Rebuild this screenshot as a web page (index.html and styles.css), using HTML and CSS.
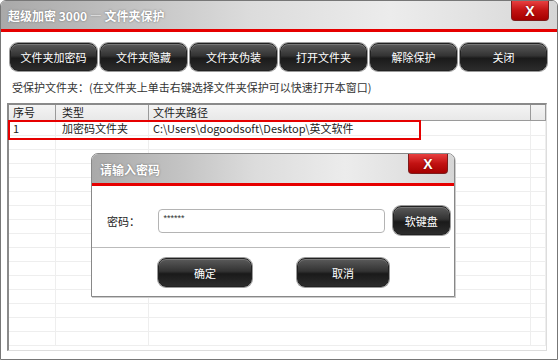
FILE: index.html
```html
<!DOCTYPE html>
<html lang="zh-CN">
<head>
  <meta charset="UTF-8">
  <title>超级加密 3000 — 文件夹保护</title>
  <link rel="stylesheet" href="styles.css">
</head>
<body>

  <!-- Main window -->
  <div class="window">
    <div class="titlebar">
      <span class="title">超级加密 3000 — 文件夹保护</span>
      <span class="close-btn">X</span>
    </div>
    <div class="redline"></div>

    <div class="toolbar">
      <button class="btn">文件夹加密码</button>
      <button class="btn">文件夹隐藏</button>
      <button class="btn">文件夹伪装</button>
      <button class="btn">打开文件夹</button>
      <button class="btn">解除保护</button>
      <button class="btn">关闭</button>
    </div>

    <p class="hint">受保护文件夹：(在文件夹上单击右键选择文件夹保护可以快速打开本窗口)</p>

    <div class="list">
      <div class="list-head">
        <div class="cell c-no">序号</div>
        <div class="cell c-type">类型</div>
        <div class="cell c-path">文件夹路径</div>
        <div class="cell c-end"></div>
      </div>
      <div class="list-row first">
        <div class="cell c-no">1</div>
        <div class="cell c-type">加密码文件夹</div>
        <div class="cell c-path">C:\Users\dogoodsoft\Desktop\英文软件</div>
        <div class="cell c-end"></div>
      </div>
      <div class="list-row"><div class="cell c-no"></div><div class="cell c-type"></div><div class="cell c-path"></div><div class="cell c-end"></div></div>
      <div class="list-row"><div class="cell c-no"></div><div class="cell c-type"></div><div class="cell c-path"></div><div class="cell c-end"></div></div>
      <div class="list-row"><div class="cell c-no"></div><div class="cell c-type"></div><div class="cell c-path"></div><div class="cell c-end"></div></div>
      <div class="list-row"><div class="cell c-no"></div><div class="cell c-type"></div><div class="cell c-path"></div><div class="cell c-end"></div></div>
      <div class="list-row"><div class="cell c-no"></div><div class="cell c-type"></div><div class="cell c-path"></div><div class="cell c-end"></div></div>
      <div class="list-row"><div class="cell c-no"></div><div class="cell c-type"></div><div class="cell c-path"></div><div class="cell c-end"></div></div>
      <div class="list-row"><div class="cell c-no"></div><div class="cell c-type"></div><div class="cell c-path"></div><div class="cell c-end"></div></div>
      <div class="list-row"><div class="cell c-no"></div><div class="cell c-type"></div><div class="cell c-path"></div><div class="cell c-end"></div></div>
      <div class="list-row"><div class="cell c-no"></div><div class="cell c-type"></div><div class="cell c-path"></div><div class="cell c-end"></div></div>
      <div class="list-row"><div class="cell c-no"></div><div class="cell c-type"></div><div class="cell c-path"></div><div class="cell c-end"></div></div>
      <div class="list-row"><div class="cell c-no"></div><div class="cell c-type"></div><div class="cell c-path"></div><div class="cell c-end"></div></div>
      <div class="list-row"><div class="cell c-no"></div><div class="cell c-type"></div><div class="cell c-path"></div><div class="cell c-end"></div></div>
      <div class="list-row"><div class="cell c-no"></div><div class="cell c-type"></div><div class="cell c-path"></div><div class="cell c-end"></div></div>
      <div class="list-row"><div class="cell c-no"></div><div class="cell c-type"></div><div class="cell c-path"></div><div class="cell c-end"></div></div>
      <div class="list-row"><div class="cell c-no"></div><div class="cell c-type"></div><div class="cell c-path"></div><div class="cell c-end"></div></div>
    </div>

    <!-- red highlight around the first row -->
    <div class="mark"></div>
  </div>

  <!-- Password dialog -->
  <div class="dialog">
    <div class="titlebar dlg-titlebar">
      <span class="title dlg-title">请输入密码</span>
      <span class="close-btn dlg-close">X</span>
    </div>
    <div class="redline"></div>

    <div class="dlg-body">
      <div class="pwd-row">
        <span class="pwd-label">密码：</span>
        <div class="pwd-input">******</div>
        <button class="btn btn-keyboard">软键盘</button>
      </div>
      <div class="separator"></div>
      <div class="dlg-actions">
        <button class="btn btn-ok">确定</button>
        <button class="btn btn-cancel">取消</button>
      </div>
    </div>
  </div>

</body>
</html>
```

FILE: styles.css
```css
* {
  margin: 0;
  padding: 0;
  box-sizing: border-box;
}

html, body {
  width: 558px;
  height: 360px;
  overflow: hidden;
  font-family: "Microsoft YaHei", "Noto Sans CJK SC", "Noto Sans", sans-serif;
  font-size: 11px;
  color: #222;
  background: #fff;
}

.window {
  position: relative;
  width: 558px;
  height: 360px;
  border: 1px solid #777;
  border-radius: 6px 6px 0 0;
  background: #fff;
  overflow: hidden;
}

/* Title bars */
.titlebar {
  height: 28px;
  display: flex;
  justify-content: space-between;
  align-items: flex-start;
  background: linear-gradient(to right, #a9a9a9 0%, #c4c4c4 25%, #dcdcdc 45%, #ececec 70%, #e2e2e2 85%, #d6d6d6 100%);
}

.title {
  padding: 7px 0 0 7px;
  color: #fff;
  font-size: 12px;
  font-weight: bold;
  line-height: 16px;
  text-shadow: 0 0 2px #666;
}

.close-btn {
  width: 38px;
  height: 20px;
  margin-right: 8px;
  display: flex;
  justify-content: center;
  align-items: center;
  color: #fff;
  font-family: "Liberation Sans", Arial, sans-serif;
  font-size: 14px;
  font-weight: bold;
  background: linear-gradient(#e84040, #c21212 50%, #a50000);
  border: 1px solid #7c1c1c;
  border-top: none;
  border-radius: 0 0 4px 4px;
  text-shadow: 0 0 2px #600;
}

.redline {
  height: 3px;
  background: #e60000;
}

/* Buttons */
.btn {
  height: 28px;
  color: #fff;
  font-family: inherit;
  font-size: 11px;
  border: 1px solid #222;
  border-radius: 8px;
  background: linear-gradient(#5a5a5a 0%, #333 45%, #1a1a1a 55%, #2c2c2c 100%);
  box-shadow: 0 0 0 1px #9a9a9a, inset 0 1px 0 #777;
  cursor: pointer;
}

.toolbar {
  display: flex;
  gap: 3px;
  padding: 11px 0 0 9px;
}

.toolbar .btn {
  width: 87px;
}

.hint {
  margin-top: 8px;
  padding-left: 11px;
  line-height: 16px;
  color: #333;
}

/* File list */
.list {
  width: 540px;
  height: 248px;
  margin: 8px 0 0 6px;
  border-top: 2px solid #8a8a8a;
  border-left: 2px solid #8a8a8a;
  border-right: 1px solid #ddd;
  border-bottom: 1px solid #ddd;
  overflow: hidden;
}

.list-head,
.list-row {
  display: flex;
}

.list-head {
  height: 16px;
  background: linear-gradient(#f4f4f4, #e8e8e8);
  border-bottom: 1px solid #9a9a9a;
}

.list-head .cell {
  border-right: 1px solid #9a9a9a;
  line-height: 15px;
}

.list-row {
  height: 14px;
  border-bottom: 1px solid #eee;
}

.list-row .cell {
  border-right: 1px solid #eee;
  line-height: 15px;
}

.list-row.first {
  height: 15px;
}

.cell {
  padding-left: 4px;
  white-space: nowrap;
}

.c-no { width: 47px; }
.c-type { width: 93px; padding-left: 6px; }
.c-path { width: 382px; }
.c-end { flex: 1; }

.mark {
  position: absolute;
  left: 7px;
  top: 119px;
  width: 413px;
  height: 20px;
  border: 2px solid #e60000;
}

/* Dialog */
.dialog {
  position: absolute;
  left: 91px;
  top: 153px;
  width: 364px;
  height: 144px;
  border: 1px solid #888;
  border-radius: 7px 7px 0 0;
  background: #fff;
  overflow: hidden;
  box-shadow: 1px 1px 0 #ccc;
}

.dlg-titlebar {
  height: 29px;
}

.dlg-title {
  padding: 8px 0 0 8px;
}

.dlg-close {
  width: 40px;
  margin-right: 6px;
}

.dlg-body {
  padding: 20px 4px 0 0;
}

.pwd-row {
  display: flex;
  align-items: center;
  height: 29px;
}

.pwd-label {
  width: 66px;
  padding-left: 15px;
  font-size: 11px;
}

.pwd-input {
  width: 229px;
  height: 24px;
  padding: 3px 5px;
  border: 1px solid #b4b4b4;
  border-radius: 4px;
  font-family: "Liberation Sans", Arial, sans-serif;
  font-size: 9px;
  line-height: 10px;
  color: #333;
}

.btn-keyboard {
  width: 58px;
  height: 29px;
  margin-left: 8px;
}

.separator {
  height: 1px;
  margin-top: 12px;
  background: #bbb;
}

.dlg-actions {
  display: flex;
  gap: 45px;
  padding: 10px 0 0 66px;
}

.btn-ok {
  width: 94px;
  height: 29px;
}

.btn-cancel {
  width: 92px;
  height: 29px;
}
```
